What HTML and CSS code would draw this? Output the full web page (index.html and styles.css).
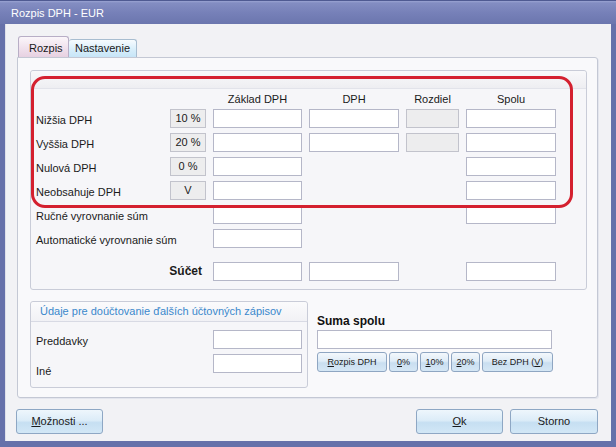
FILE: index.html
```html
<!DOCTYPE html>
<html>
<head>
<meta charset="utf-8">
<link rel="stylesheet" href="styles.css">
</head>
<body>
<div class="window">
  <div class="titlebar">Rozpis DPH - EUR</div>
  <div class="client">
    <div class="tabs">
      <div class="tab active">Rozpis</div>
      <div class="tab">Nastavenie</div>
    </div>
    <div class="panel">
      <div class="group main">
        <div class="group-head"></div>
        <div class="grid">
          <div></div><div></div>
          <div class="colh">Základ DPH</div><div class="colh">DPH</div><div class="colh">Rozdiel</div><div class="colh">Spolu</div>

          <div class="lbl">Nižšia DPH</div><div class="pct">10 %</div>
          <div class="box"></div><div class="box"></div><div class="box gray"></div><div class="box"></div>

          <div class="lbl">Vyššia DPH</div><div class="pct">20 %</div>
          <div class="box"></div><div class="box"></div><div class="box gray"></div><div class="box"></div>

          <div class="lbl">Nulová DPH</div><div class="pct">0 %</div>
          <div class="box"></div><div></div><div></div><div class="box"></div>

          <div class="lbl">Neobsahuje DPH</div><div class="pct">V</div>
          <div class="box"></div><div></div><div></div><div class="box"></div>

          <div class="lbl wide">Ručné vyrovnanie súm</div>
          <div class="box"></div><div></div><div></div><div class="box"></div>

          <div class="lbl wide">Automatické vyrovnanie súm</div>
          <div class="box"></div><div></div><div></div><div></div>

          <div class="sum-lbl wide">Súčet</div>
          <div class="box end"></div><div class="box end"></div><div></div><div class="box end"></div>
        </div>
        <div class="highlight"></div>
      </div>

      <div class="lower">
        <div class="group side">
          <div class="side-head">Údaje pre doúčtovanie ďalších účtovných zápisov</div>
          <div class="side-grid">
            <div class="lbl">Preddavky</div><div class="box"></div>
            <div class="lbl low">Iné</div><div class="box"></div>
          </div>
        </div>
        <div class="suma">
          <div class="suma-lbl">Suma spolu</div>
          <div class="box suma-box"></div>
          <div class="sbtns">
            <div class="sbtn w70"><u>R</u>ozpis DPH</div>
            <div class="sbtn w29"><u>0</u>%</div>
            <div class="sbtn w29"><u>1</u>0%</div>
            <div class="sbtn w29"><u>2</u>0%</div>
            <div class="sbtn w71">Bez DPH (<u>V</u>)</div>
          </div>
        </div>
      </div>
    </div>

    <div class="footer">
      <div class="btn"><u>M</u>ožnosti ...</div>
      <div class="spacer"></div>
      <div class="btn"><u>O</u>k</div>
      <div class="btn storno">Storno</div>
    </div>
  </div>
</div>
</body>
</html>
```

FILE: styles.css
```css
* { box-sizing: border-box; }
html, body { margin: 0; padding: 0; }
body {
  width: 616px;
  height: 447px;
  overflow: hidden;
  font-family: "Liberation Sans", Arial, sans-serif;
  font-size: 11px;
  color: #1a1a1a;
}
.window {
  width: 616px;
  height: 447px;
  display: flex;
  flex-direction: column;
  background: #6671aa;
}
.titlebar {
  height: 24px;
  flex: none;
  padding-left: 11px;
  line-height: 25px;
  color: #fff;
  font-size: 11px;
  background: linear-gradient(#9aa3d2 0px, #838dc2 2px, #7680b8 12px, #6a75ad 24px);
  border-top: 1px solid #4f5a92;
}
.client {
  flex: 1;
  margin: 0 5px 6px 5px;
  background: #f2f2f5;
  padding: 12px 0 0 12px;
  box-shadow: inset 1px 0 0 #dfe1ea;
}
.tabs {
  display: flex;
  align-items: flex-end;
  height: 21px;
  margin-left: 1px;
  position: relative;
  z-index: 2;
}
.tab {
  height: 18px;
  padding: 0 8px 0 6px;
  line-height: 17px;
  border: 1px solid #a8bdd0;
  border-bottom: none;
  border-left: none;
  border-radius: 3px 3px 0 0;
  background: linear-gradient(#f7fbfe, #d6edfa 60%, #c7e5f7);
  color: #1a1a1a;
}
.tab.active {
  height: 21px;
  width: 51px;
  padding: 0 0 0 10px;
  line-height: 23px;
  border: 1px solid #b8aec6;
  border-bottom: none;
  background: linear-gradient(#fbf6fa, #f1e3ee 50%, #e7d1e1);
}
.tab:not(.active) { width: 68px; }
.panel {
  width: 581px;
  height: 341px;
  border: 1px solid #c4c8d4;
  border-radius: 0 3px 3px 3px;
  background: #f9f9fb;
  padding: 12px 10px 0 12px;
  box-shadow: 1px 1px 0 #e4e6ee;
}
.group {
  border: 1px solid #c9ccd8;
  border-radius: 3px;
  background: #f6f6f9;
}
.main {
  position: relative;
  padding: 0 0 8px 5px;
}
.group-head {
  height: 18px;
  margin-left: -5px;
  background: linear-gradient(#f8f8fa, #eeeef2);
  border-bottom: 1px solid #e2e3ea;
  border-radius: 3px 3px 0 0;
}
.grid {
  display: grid;
  grid-template-columns: 127px 36px 89px 90px 53px 90px;
  grid-template-rows: 15px repeat(6, 19px) 28px;
  column-gap: 7px;
  row-gap: 5px;
}
.colh {
  text-align: center;
  padding-top: 4px;
  line-height: 13px;
  white-space: nowrap;
}
.lbl {
  padding-top: 3px;
  line-height: 17px;
  white-space: nowrap;
}
.wide { grid-column: span 2; }
.sum-lbl {
  align-self: end;
  text-align: right;
  padding-right: 4px;
  font-weight: bold;
  font-size: 12px;
  line-height: 19px;
  padding-top: 1px;
}
.box {
  height: 19px;
  background: #fff;
  border: 1px solid #b5b7c8;
}
.box.gray {
  background: #ededee;
  border-color: #c2c3cc;
}
.box.end { align-self: end; }
.pct {
  height: 19px;
  background: #ededee;
  border: 1px solid #c2c3cc;
  text-align: center;
  line-height: 17px;
}
.highlight {
  position: absolute;
  left: 0;
  top: 5px;
  width: 542px;
  height: 132px;
  border: 3px solid #d4202f;
  border-radius: 14px;
  pointer-events: none;
}
.lower {
  display: flex;
  margin-top: 11px;
  gap: 9px;
}
.side {
  width: 278px;
  height: 87px;
  flex: none;
}
.side-head {
  height: 20px;
  padding-left: 9px;
  line-height: 19px;
  color: #3a88cc;
  border-bottom: 1px solid #d8dae4;
  background: linear-gradient(#fbfbfc, #f1f1f5);
  border-radius: 3px 3px 0 0;
  white-space: nowrap;
}
.side-grid {
  display: grid;
  grid-template-columns: 177px 89px;
  grid-template-rows: 19px 19px;
  row-gap: 5px;
  padding: 8px 0 0 5px;
}
.side-grid .lbl.low { padding-top: 9px; }
.suma {
  display: flex;
  flex-direction: column;
  padding-top: 13px;
}
.suma-lbl {
  font-weight: bold;
  font-size: 12px;
  line-height: 15px;
  color: #111;
}
.suma-box {
  width: 235px;
  margin-top: 1px;
}
.sbtns {
  display: flex;
  gap: 2px;
  margin-top: 3px;
}
.sbtn {
  height: 20px;
  border: 1px solid #8fa6c2;
  border-radius: 3px;
  background: linear-gradient(#f3f8fc, #dfecf7 45%, #c9def0 55%, #d5e7f5);
  font-size: 9px;
  line-height: 18px;
  text-align: center;
  color: #1a1a1a;
  white-space: nowrap;
}
.w70 { width: 70px; }
.w29 { width: 29px; }
.w71 { width: 71px; }
.footer {
  display: flex;
  margin-top: 11px;
  margin-left: -1px;
  width: 582px;
}
.spacer { flex: 1; }
.btn {
  width: 87px;
  height: 25px;
  border: 1px solid #8ea7c4;
  border-radius: 3px;
  background: linear-gradient(#eef6fc, #dcecf8 45%, #c6dff2 55%, #d2e7f6);
  text-align: center;
  line-height: 23px;
  font-size: 11px;
  color: #1a1a1a;
}
.btn.storno { width: 88px; margin-left: 7px; }
```
